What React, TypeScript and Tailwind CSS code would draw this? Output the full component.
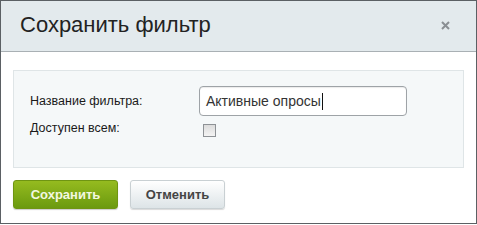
export default function App() {
  return (
    <div className="w-[477px] h-[225px] bg-white" style={{ fontFamily: '"Liberation Sans", Arial, sans-serif' }}>
      <div className="w-[477px] h-[224px] border border-[#5b6064] flex flex-col bg-white">
        {/* header */}
        <div className="h-[51px] shrink-0 bg-[#e3eaed] border-b border-[#a9b0b4] flex items-center justify-between pl-[19px] pr-[26px]">
          <h1 className="text-[22px] leading-none text-[#222] pb-[2px]">Сохранить фильтр</h1>
          <button className="text-[#8a8f93] -mt-[2px]">
            <svg width="9" height="9" viewBox="0 0 9 9">
              <path d="M1 1L8 8M8 1L1 8" stroke="currentColor" strokeWidth="2" />
            </svg>
          </button>
        </div>

        {/* body */}
        <div className="flex-1 flex flex-col px-3 pt-[18px]">
          <div className="h-[98px] bg-[#f5f8f9] border border-[#dfe5e7] px-4 pt-[15px]">
            <div className="flex items-center h-[30px]">
              <label className="w-[169px] text-[12.5px] text-[#1a1a1a]">Название фильтра:</label>
              <div className="w-[208px] h-[30px] rounded-[4px] border border-[#9ea3a7] bg-white flex items-center px-[6px] shadow-[inset_0_1px_1px_rgba(0,0,0,0.08)]">
                <span className="text-[14px] text-[#333]">Активные опросы</span>
                <span className="w-px h-[17px] bg-[#111] ml-[1px]" />
              </div>
            </div>
            <div className="flex items-center h-[23px] mt-[1px]">
              <label className="w-[173px] text-[12.5px] text-[#1a1a1a]">Доступен всем:</label>
              <span className="w-[13px] h-[13px] border border-[#8e9296] bg-gradient-to-b from-[#dcdcdc] to-[#f4f4f4] mt-[3px]" />
            </div>
          </div>

          <div className="flex gap-3 mt-[12px]">
            <button className="w-[105px] h-[29px] rounded-[3px] bg-gradient-to-b from-[#95bb1f] to-[#6b9a0f] border border-[#6f9512] text-[13px] font-bold text-[#f3f8e0] shadow-[0_1px_1px_rgba(0,0,0,0.2)]">
              Сохранить
            </button>
            <button className="w-[95px] h-[29px] rounded-[3px] bg-gradient-to-b from-white to-[#dde4e7] border border-[#c9d0d3] text-[13px] font-bold text-[#444] shadow-[0_1px_1px_rgba(0,0,0,0.15)]">
              Отменить
            </button>
          </div>
        </div>
      </div>
    </div>
  )
}
